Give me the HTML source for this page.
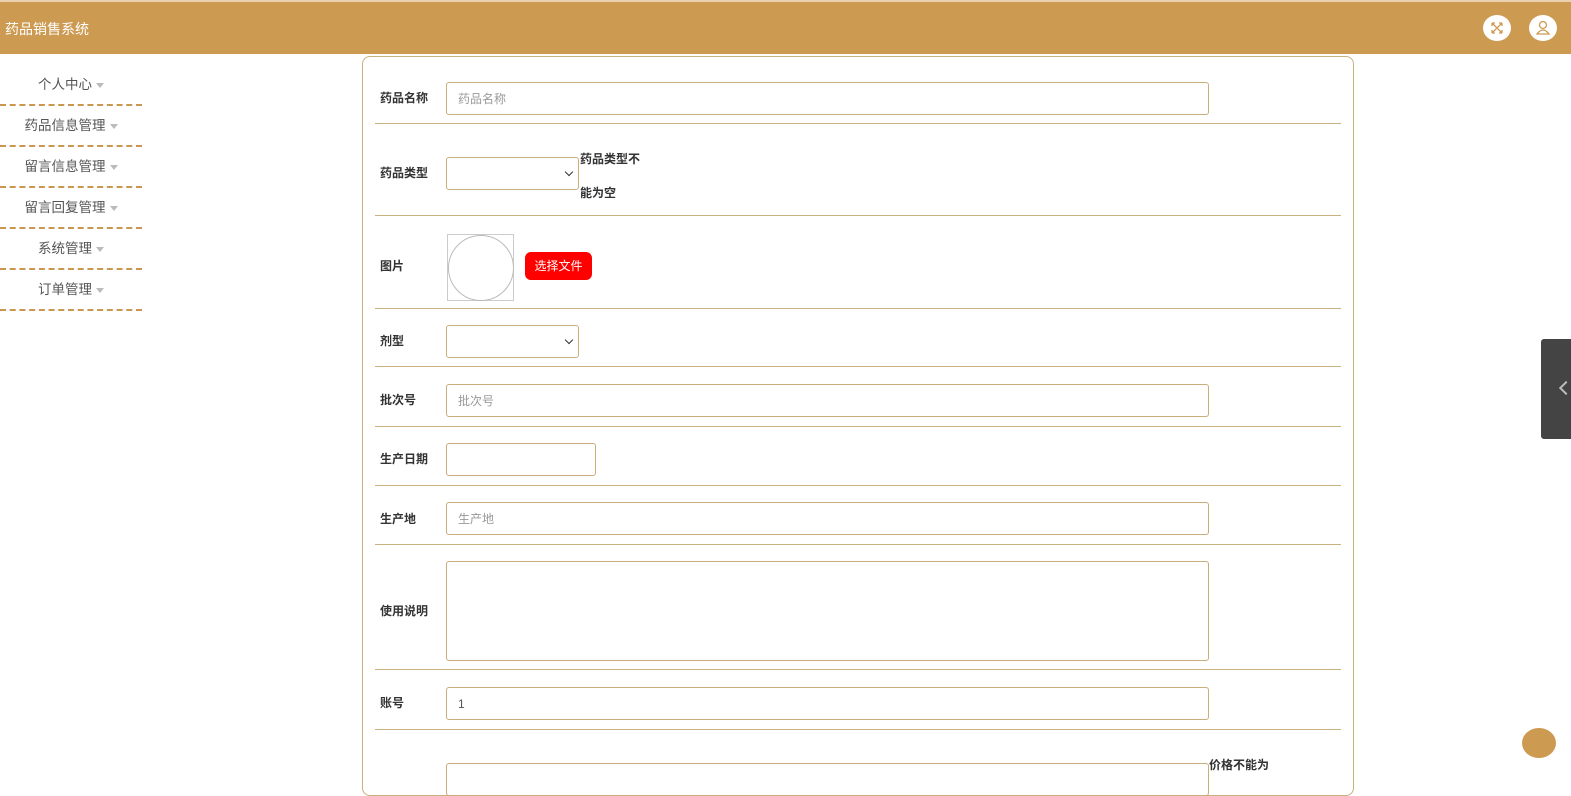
<!DOCTYPE html>
<html><head><meta charset="utf-8"><style>
*{box-sizing:border-box;margin:0;padding:0}
body{width:1571px;height:773px;overflow:hidden;background:#fff;font-family:"Liberation Sans","Noto Sans CJK SC",sans-serif;position:relative}
.hdr{position:absolute;left:0;top:0;width:1571px;height:54px;background:#cd9a52;border-top:2px solid #e8d2b0}
.hdr .t{position:absolute;left:5px;top:17px;color:#fff;font-size:14px}
.ic{position:absolute;top:13px;width:28px;height:26px;border-radius:50%;background:#fff}
.side{position:absolute;left:0;top:65px;width:142px}
.side div{height:41px;line-height:40px;text-align:center;font-size:13.5px;color:#555;border-bottom:2px dashed #c9974f}
.side div span{display:inline-block;border:4px solid transparent;border-top:5px solid #bbb;vertical-align:middle;margin-left:4px;margin-top:4px}
.card{position:absolute;left:362px;top:56px;width:992px;height:740px;border:1px solid #c9b07f;border-radius:8px}
.row{position:absolute;left:375px;width:966px;border-bottom:1px solid #c9b07f}
.lab{position:absolute;left:380px;font-size:12px;font-weight:bold;color:#333;margin-top:-3px}
.inp{position:absolute;left:446px;width:763px;height:33px;border:1px solid #c9ad7a;border-radius:3px;font-size:12px;color:#999;padding:10px 11px;line-height:12px}
.sel{position:absolute;left:446px;width:133px;height:33px;border:1px solid #c9ad7a;border-radius:3px}
.sel:after{content:"";position:absolute;right:6px;top:11px;width:5px;height:5px;border-right:1.5px solid #333;border-bottom:1.5px solid #333;transform:rotate(45deg)}
.err{position:absolute;font-size:12px;font-weight:bold;color:#333}
</style></head><body>
<div class="hdr"><div class="t">药品销售系统</div>
<div class="ic" style="left:1483px"><svg width="28" height="26" viewBox="0 0 28 26"><path d="M9 8l10 10M19 8L9 18M9 8h3M9 8v3M19 8h-3M19 8v3M9 18h3M9 18v-3M19 18h-3M19 18v-3" stroke="#cd9a52" stroke-width="1.3" fill="none"/></svg></div>
<div class="ic" style="left:1529px"><svg width="28" height="26" viewBox="0 0 28 26"><circle cx="14" cy="10" r="3.5" stroke="#cd9a52" stroke-width="1.3" fill="none"/><path d="M8 19q6-8 12 0z" stroke="#cd9a52" stroke-width="1.3" fill="none"/></svg></div>
</div>
<div class="side">
<div>个人中心<span></span></div><div>药品信息管理<span></span></div><div>留言信息管理<span></span></div><div>留言回复管理<span></span></div><div>系统管理<span></span></div><div>订单管理<span></span></div>
</div>
<div class="card"></div>
<div class="row" style="top:56px;height:68px"></div>
<div class="row" style="top:124px;height:92px"></div>
<div class="row" style="top:216px;height:93px"></div>
<div class="row" style="top:309px;height:58px"></div>
<div class="row" style="top:367px;height:60px"></div>
<div class="row" style="top:427px;height:59px"></div>
<div class="row" style="top:486px;height:59px"></div>
<div class="row" style="top:545px;height:125px"></div>
<div class="row" style="top:670px;height:60px"></div>

<div class="lab" style="top:92px">药品名称</div><div class="inp" style="top:82px">药品名称</div>
<div class="lab" style="top:167px">药品类型</div><div class="sel" style="top:157px"></div>
<div class="err" style="left:580px;top:150px">药品类型不</div><div class="err" style="left:580px;top:184px">能为空</div>
<div class="lab" style="top:260px">图片</div>
<div style="position:absolute;left:447px;top:234px;width:67px;height:67px;border:1px solid #ccc"><div style="position:absolute;left:0;top:0;width:66px;height:66px;border:1px solid #bbb;border-radius:50%"></div></div>
<div style="position:absolute;left:525px;top:252px;width:67px;height:28px;background:#f00;border-radius:6px;color:#fff;font-size:12px;text-align:center;line-height:28px">选择文件</div>
<div class="lab" style="top:335px">剂型</div><div class="sel" style="top:325px"></div>
<div class="lab" style="top:394px">批次号</div><div class="inp" style="top:384px">批次号</div>
<div class="lab" style="top:453px">生产日期</div><div class="inp" style="top:443px;width:150px"></div>
<div class="lab" style="top:513px">生产地</div><div class="inp" style="top:502px">生产地</div>
<div class="lab" style="top:605px">使用说明</div><div class="inp" style="top:561px;height:100px"></div>
<div class="lab" style="top:697px">账号</div><div class="inp" style="top:687px;color:#555">1</div>
<div class="inp" style="top:763px"></div>
<div class="err" style="left:1209px;top:756px">价格不能为</div>
<div style="position:absolute;left:1541px;top:339px;width:30px;height:100px;background:#444;border-radius:3px 0 0 3px"><div style="position:absolute;left:20px;top:44px;width:10px;height:10px;border-left:2px solid #bbb;border-bottom:2px solid #bbb;transform:rotate(45deg)"></div></div>
<div style="position:absolute;left:1522px;top:728px;width:34px;height:30px;border-radius:50%;background:#cd9a52"></div>
</body></html>
